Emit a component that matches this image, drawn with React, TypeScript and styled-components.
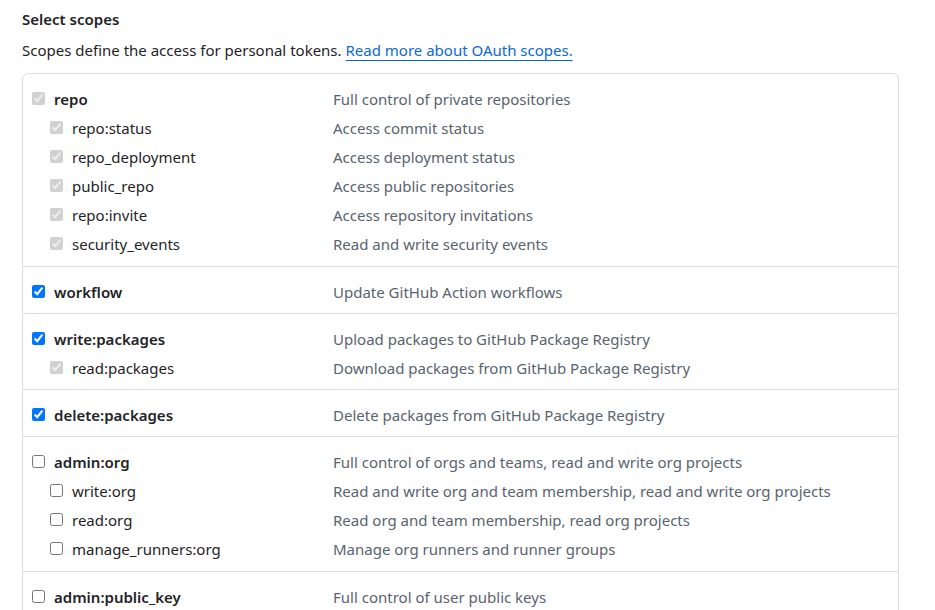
import React from "react";
import styled, { createGlobalStyle } from "styled-components";

const Global = createGlobalStyle`
  html, body { margin: 0; padding: 0; background: #ffffff; }
  body { font-family: "Noto Sans", "Segoe UI", sans-serif; color: #1f2328; }
`;

const Page = styled.div`
  padding: 8px 36px 0 22px;
  width: 935px;
  box-sizing: border-box;
`;

const Heading = styled.h3`
  margin: 0;
  font-size: 15px;
  font-weight: 600;
  line-height: 22px;
`;

const Intro = styled.p`
  margin: 9px 0 0;
  font-size: 15px;
  line-height: 22px;
`;

const Link = styled.a`
  color: #0969da;
  text-decoration: underline;
  text-underline-offset: 4px;
  text-decoration-thickness: 1px;
`;

const Box = styled.div`
  margin-top: 12px;
  border: 1px solid #d8dee4;
  border-radius: 6px;
  overflow: hidden;
`;

const Section = styled.ul<{ $tall?: boolean }>`
  list-style: none;
  margin: 0;
  padding: 10px 0 ${(p) => (p.$tall ? 8 : 7)}px;
  & + & {
    border-top: 1px solid #d8dee4;
  }
`;

const Row = styled.li<{ $child?: boolean }>`
  display: grid;
  grid-template-columns: 301px 1fr;
  align-items: center;
  height: 29px;
  padding-left: ${(p) => (p.$child ? 27 : 9)}px;
  font-size: 15px;
`;

const Label = styled.label<{ $child?: boolean }>`
  display: flex;
  align-items: center;
  gap: 9px;
  font-weight: ${(p) => (p.$child ? 400 : 600)};
  color: #1f2328;
`;

const Check = styled.input`
  margin: 0;
  width: 13px;
  height: 13px;
`;

const Desc = styled.span<{ $child?: boolean }>`
  color: #59636e;
  margin-left: ${(p) => (p.$child ? -18 : 0)}px;
`;

type Scope = { name: string; desc: string; checked?: boolean; disabled?: boolean };
type Group = { parent: Scope; children: Scope[] };

const groups: Group[] = [
  {
    parent: { name: "repo", desc: "Full control of private repositories", checked: true, disabled: true },
    children: [
      { name: "repo:status", desc: "Access commit status", checked: true, disabled: true },
      { name: "repo_deployment", desc: "Access deployment status", checked: true, disabled: true },
      { name: "public_repo", desc: "Access public repositories", checked: true, disabled: true },
      { name: "repo:invite", desc: "Access repository invitations", checked: true, disabled: true },
      { name: "security_events", desc: "Read and write security events", checked: true, disabled: true },
    ],
  },
  {
    parent: { name: "workflow", desc: "Update GitHub Action workflows", checked: true },
    children: [],
  },
  {
    parent: { name: "write:packages", desc: "Upload packages to GitHub Package Registry", checked: true },
    children: [
      { name: "read:packages", desc: "Download packages from GitHub Package Registry", checked: true, disabled: true },
    ],
  },
  {
    parent: { name: "delete:packages", desc: "Delete packages from GitHub Package Registry", checked: true },
    children: [],
  },
  {
    parent: { name: "admin:org", desc: "Full control of orgs and teams, read and write org projects" },
    children: [
      { name: "write:org", desc: "Read and write org and team membership, read and write org projects" },
      { name: "read:org", desc: "Read org and team membership, read org projects" },
      { name: "manage_runners:org", desc: "Manage org runners and runner groups" },
    ],
  },
  {
    parent: { name: "admin:public_key", desc: "Full control of user public keys" },
    children: [],
  },
];

function ScopeRow({ scope, child }: { scope: Scope; child?: boolean }) {
  return (
    <Row $child={child}>
      <Label $child={child}>
        <Check type="checkbox" defaultChecked={scope.checked} disabled={scope.disabled} />
        {scope.name}
      </Label>
      <Desc $child={child}>{scope.desc}</Desc>
    </Row>
  );
}

export default function App() {
  return (
    <>
      <Global />
      <Page>
        <Heading>Select scopes</Heading>
        <Intro>
          Scopes define the access for personal tokens. <Link href="#">Read more about OAuth scopes.</Link>
        </Intro>
        <Box>
          {groups.map((g) => (
            <Section key={g.parent.name} $tall={g.children.length > 2}>
              <ScopeRow scope={g.parent} />
              {g.children.map((c) => (
                <ScopeRow key={c.name} scope={c} child />
              ))}
            </Section>
          ))}
        </Box>
      </Page>
    </>
  );
}
